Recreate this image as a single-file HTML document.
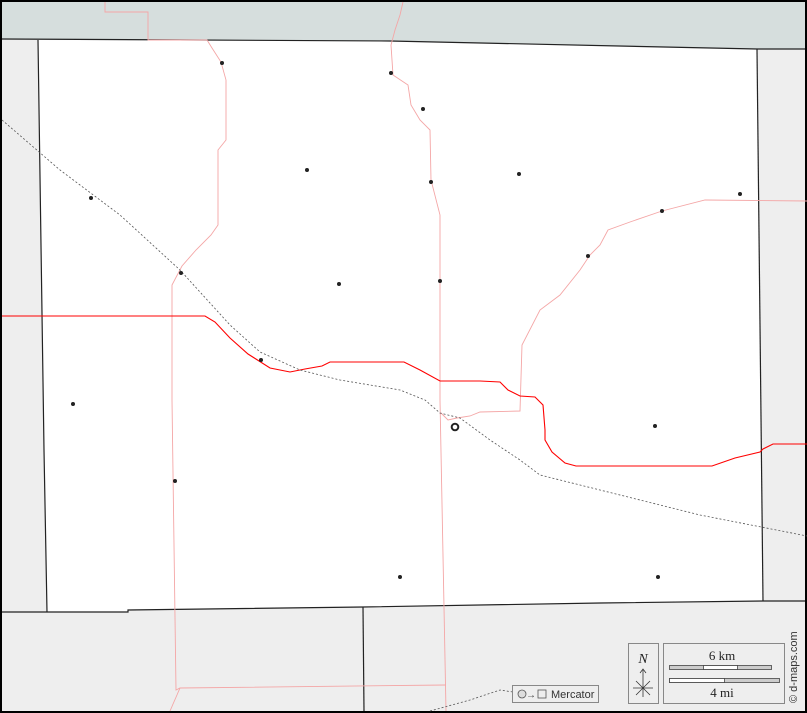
<!DOCTYPE html>
<html><head><meta charset="utf-8"><style>
html,body{margin:0;padding:0;background:#000;}
svg{display:block;}
</style></head><body>
<svg width="807" height="713" viewBox="0 0 807 713" xmlns="http://www.w3.org/2000/svg">
<rect x="0" y="0" width="807" height="713" fill="#000"/>
<rect x="2" y="2" width="803" height="709" fill="#eeeeee"/>
<!-- top strip -->
<polygon points="2,2 805,2 805,49 757,49 390,41 2,39" fill="#d6dedd"/>
<!-- county -->
<polygon points="38,40 390,41 757,49 763,601 600,603 363,607 128,610 128,612 47,612 44,450" fill="#fff"/>
<!-- boundaries -->
<g fill="none" stroke="#222" stroke-width="1.2">
<polyline points="2,39 390,41 757,49 805,49"/>
<polyline points="38,40 44,450 47,612"/>
<polyline points="757,49 763,601"/>
<polyline points="2,612 47,612 128,612 128,610 363,607 600,603 763,601 805,601"/>
<polyline points="363,607 364,711"/>
</g>
<!-- pink roads -->
<g fill="none" stroke="#f4a6a6" stroke-width="0.9">
<polyline points="105,2 105,12 148,12 148,40 207,40 212,48 221,62 226,80 226,140 218,150 218,225 211,235 196,250 182,266 172,285 172,400 176,690 180,688 446,685"/>
<polyline points="403,2 400,15 395,30 391,45 393,75 408,85 411,105 420,120 430,130 431,180 440,215 440,400 446,711"/>
<polyline points="441,413 448,420 457,418 470,416 480,412 520,411 522,345 540,310 560,295 580,270 590,255 600,245 608,230 630,222 662,211 705,200 807,201"/>
<polyline points="180,688 170,711"/>
</g>
<!-- red road -->
<polyline fill="none" stroke="#ff0000" stroke-width="1.1" points="2,316 205,316 215,322 230,338 248,354 270,368 290,372 305,369 322,366 330,362 360,362 404,362 420,370 440,381 480,381 500,382 508,390 520,396 535,397 543,405 545,430 545,440 552,452 565,463 576,466 650,466 712,466 735,458 760,452 763,449 773,444 807,444"/>
<!-- dashed railroad -->
<polyline fill="none" stroke="#555" stroke-width="0.8" stroke-dasharray="2,2" points="2,120 60,170 120,215 180,270 230,325 260,352 300,370 340,380 370,385 400,390 425,400 440,413 460,418 490,440 520,460 540,475 600,490 700,515 807,536"/>
<polyline fill="none" stroke="#555" stroke-width="0.8" stroke-dasharray="2,2" points="430,711 470,700 500,690 513,692"/>
<!-- towns -->
<g fill="#222">
<circle cx="222" cy="63" r="2"/><circle cx="391" cy="73" r="2"/><circle cx="423" cy="109" r="2"/>
<circle cx="307" cy="170" r="2"/><circle cx="519" cy="174" r="2"/><circle cx="431" cy="182" r="2"/>
<circle cx="91" cy="198" r="2"/><circle cx="740" cy="194" r="2"/><circle cx="662" cy="211" r="2"/>
<circle cx="588" cy="256" r="2"/><circle cx="181" cy="273" r="2"/><circle cx="440" cy="281" r="2"/>
<circle cx="339" cy="284" r="2"/><circle cx="261" cy="360" r="2"/><circle cx="73" cy="404" r="2"/>
<circle cx="655" cy="426" r="2"/><circle cx="175" cy="481" r="2"/><circle cx="400" cy="577" r="2"/>
<circle cx="658" cy="577" r="2"/>
</g>
<circle cx="455" cy="427" r="3.3" fill="none" stroke="#222" stroke-width="2"/>
<!-- Mercator box -->
<rect x="512.5" y="685.5" width="86" height="17" fill="#eee" stroke="#888"/>
<circle cx="522" cy="694" r="4" fill="#ddd" stroke="#555" stroke-width="0.8"/>
<text x="526" y="698" font-family="Liberation Sans, sans-serif" font-size="10" fill="#444">→</text>
<rect x="538" y="690" width="8" height="8" fill="#eee" stroke="#555" stroke-width="0.8"/>
<text x="551" y="698" font-family="Liberation Sans, sans-serif" font-size="11" fill="#333">Mercator</text>
<!-- north -->
<rect x="628.5" y="643.5" width="30" height="60" fill="#eee" stroke="#888"/>
<text x="643" y="663" text-anchor="middle" font-family="Liberation Serif, serif" font-style="italic" font-size="14" fill="#222">N</text>
<g stroke="#333" stroke-width="0.8" fill="none">
<line x1="643" y1="670" x2="643" y2="697"/>
<polyline points="640,673 643,669 646,673"/>
<line x1="633" y1="688" x2="653" y2="688"/>
<line x1="636" y1="681" x2="650" y2="695"/>
<line x1="650" y1="681" x2="636" y2="695"/>
</g>
<!-- scale -->
<rect x="663.5" y="643.5" width="121" height="60" fill="#eee" stroke="#888"/>
<text x="722" y="660" text-anchor="middle" font-family="Liberation Serif, serif" font-size="13" fill="#222">6 km</text>
<rect x="669.5" y="665.5" width="102" height="4" fill="#ccc" stroke="#444" stroke-width="0.8"/>
<rect x="703.5" y="665.5" width="34" height="4" fill="#fff" stroke="#444" stroke-width="0.8"/>
<rect x="669.5" y="678.5" width="110" height="4" fill="#ccc" stroke="#444" stroke-width="0.8"/>
<rect x="669.5" y="678.5" width="55" height="4" fill="#fff" stroke="#444" stroke-width="0.8"/>
<text x="722" y="697" text-anchor="middle" font-family="Liberation Serif, serif" font-size="13" fill="#222">4 mi</text>
<text transform="translate(797,703) rotate(-90)" font-family="Liberation Sans, sans-serif" font-size="11" fill="#333">© d-maps.com</text>
</svg>
</body></html>
